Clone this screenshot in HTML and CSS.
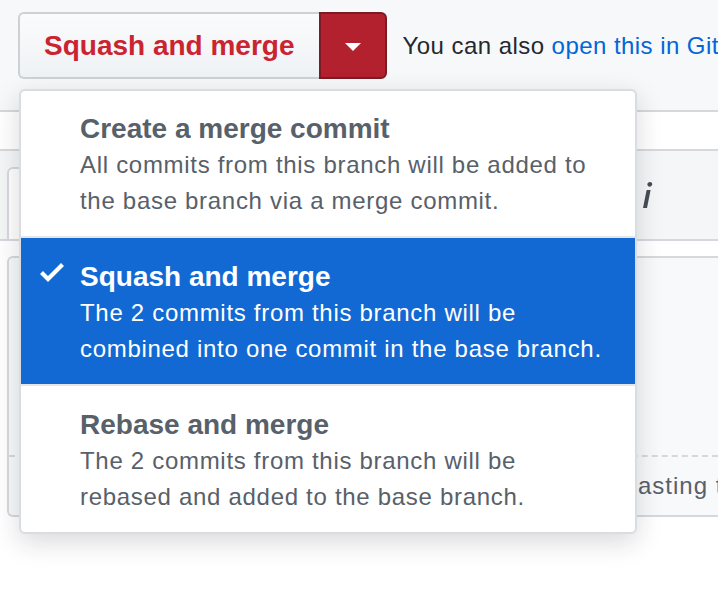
FILE: index.html
```html
<!DOCTYPE html>
<html lang="en">
<head>
<meta charset="utf-8">
<title>Merge options</title>
<link rel="stylesheet" href="styles.css">
</head>
<body>
<div class="page">
  <div class="merge-bar">
    <div class="btn-group">
      <button class="btn btn-merge" type="button">Squash and merge</button>
      <button class="btn btn-caret" type="button" aria-label="Select merge method"><span class="caret"></span></button>
    </div>
    <p class="note"><span>You can also <a href="#" class="link">open this in GitHub Desktop</a> or view <a href="#" class="link">command line instructions</a>.</span></p>
  </div>
  <div class="strip"></div>
  <div class="toolbar">
    <div class="tab">Write</div>
    <div class="tools">
      <svg class="tool-icon" width="12" height="32" viewBox="0 0 6 16" aria-hidden="true"><path fill="#444d56" d="M2.81 5h1.98L3 14H1l1.81-9zm.36-2.7c0-.7.58-1.3 1.33-1.3.56 0 1.13.38 1.13 1.03 0 .75-.59 1.3-1.33 1.3-.58 0-1.13-.38-1.13-1.03z"/></svg>
    </div>
  </div>
  <div class="gap"></div>
  <div class="editor-wrap">
    <div class="editor">
      <div class="textarea"></div>
      <div class="hint"><span>Attach files by dragging &amp; dropping, selecting or pasting</span><span class="hint-tail">&nbsp;them.</span></div>
    </div>
  </div>

  <div class="menu" role="menu">
    <div class="menu-item">
      <svg class="check" width="24" height="32" viewBox="0 0 12 16" aria-hidden="true"><path d="M12 5l-8 8-4-4 1.5-1.5L4 10l6.5-6.5L12 5z"/></svg>
      <div class="item-text">
        <div class="item-heading">Create a merge commit</div>
        <div class="item-desc">All commits from this branch will be added to the base branch via a merge commit.</div>
      </div>
    </div>
    <div class="menu-item selected">
      <svg class="check" width="24" height="32" viewBox="0 0 12 16" aria-hidden="true"><path d="M12 5l-8 8-4-4 1.5-1.5L4 10l6.5-6.5L12 5z"/></svg>
      <div class="item-text">
        <div class="item-heading">Squash and merge</div>
        <div class="item-desc">The 2 commits from this branch will be combined into one commit in the base branch.</div>
      </div>
    </div>
    <div class="menu-item">
      <svg class="check" width="24" height="32" viewBox="0 0 12 16" aria-hidden="true"><path d="M12 5l-8 8-4-4 1.5-1.5L4 10l6.5-6.5L12 5z"/></svg>
      <div class="item-text">
        <div class="item-heading">Rebase and merge</div>
        <div class="item-desc">The 2 commits from this branch will be rebased and added to the base branch.</div>
      </div>
    </div>
  </div>
</div>
</body>
</html>
```

FILE: styles.css
```css
* { box-sizing: border-box; }

html, body {
  margin: 0;
  padding: 0;
  background: #ffffff;
  overflow: hidden;
}

body {
  width: 718px;
  height: 604px;
  font-family: "Liberation Sans", Arial, sans-serif;
  color: #24292e;
}

.page {
  position: relative;
  width: 718px;
  height: 604px;
  overflow: hidden;
}

/* top merge bar */
.merge-bar {
  height: 112px;
  background: #f7f8fa;
  border-bottom: 2px solid #d5d9dd;
  padding: 12px 0 0 18px;
  display: flex;
  align-items: flex-start;
  white-space: nowrap;
}

.btn-group {
  display: flex;
  flex: none;
}

.btn {
  font-family: "Liberation Sans", Arial, sans-serif;
  height: 67px;
  margin: 0;
  cursor: pointer;
}

.btn-merge {
  padding: 0 24px;
  border: 2px solid #cdd1d5;
  border-right: 0;
  border-radius: 6px 0 0 6px;
  background: linear-gradient(#fafbfc, #eff2f5);
  color: #cb2431;
  font-size: 28px;
  font-weight: 700;
}

.btn-caret {
  width: 68px;
  padding: 0;
  border: 2px solid #7a1b25;
  border-radius: 0 6px 6px 0;
  background: #b3202e;
  display: flex;
  align-items: center;
  justify-content: center;
}

.caret {
  display: block;
  width: 0;
  height: 0;
  margin-top: 3px;
  border-top: 8px solid #ffffff;
  border-left: 8px solid transparent;
  border-right: 8px solid transparent;
}

.note {
  margin: 0 0 0 16px;
  height: 67px;
  display: flex;
  align-items: center;
  font-size: 24px;
  letter-spacing: 0.45px;
  color: #24292e;
}

.note .link {
  color: #0366d6;
  text-decoration: none;
}

/* background comment form */
.strip {
  height: 39px;
  background: #ffffff;
  border-bottom: 2px solid #d5d9dd;
}

.toolbar {
  height: 90px;
  background: #f5f6f8;
  border-bottom: 2px solid #d5d9dd;
  padding: 16px 0 0 7px;
  display: flex;
  justify-content: space-between;
  align-items: flex-start;
}

.tab {
  width: 130px;
  height: 72px;
  background: #ffffff;
  border: 2px solid #d5d9dd;
  border-bottom: 0;
  border-radius: 6px 6px 0 0;
  font-size: 24px;
  color: #24292e;
  padding: 18px 24px;
}

.tools {
  display: flex;
  padding-top: 13px;
  padding-right: 65px;
}

.tool-icon { display: block; }

.gap {
  height: 15px;
  background: #ffffff;
}

.editor-wrap {
  padding-left: 7px;
  background: #ffffff;
}

.editor {
  border: 2px solid #d5d9dd;
  border-right: 0;
  border-radius: 6px 0 0 6px;
  background: #f8f9fa;
}

.textarea {
  height: 197px;
}

.hint {
  height: 60px;
  border-top: 2px dashed #d5d9dd;
  padding-top: 11px;
  display: flex;
  justify-content: flex-end;
  white-space: nowrap;
  font-size: 24px;
  line-height: 36px;
  letter-spacing: 1px;
  color: #586069;
}

.hint-tail {
  flex: none;
  width: 10px;
  min-width: 0;
  overflow: visible;
}

/* dropdown menu */
.menu {
  position: absolute;
  left: 19px;
  top: 89px;
  width: 618px;
  background: #ffffff;
  border: 2px solid #d9dce0;
  border-radius: 6px;
  box-shadow: 0 8px 26px rgba(27, 31, 35, 0.17);
  overflow: hidden;
}

.menu-item {
  display: flex;
  align-items: flex-start;
  padding: 20px 28px 17px 19px;
  color: #586069;
}

.menu-item + .menu-item {
  border-top: 2px solid #e4e7ea;
  padding-top: 21px;
}

.check {
  flex: none;
  margin-top: -3px;
  margin-right: 16px;
  fill: #ffffff;
  visibility: hidden;
}

.menu-item.selected {
  background: #1269d3;
  color: #ffffff;
}

.menu-item.selected .check { visibility: visible; }

.item-text { flex: 1; min-width: 0; }

.item-heading {
  font-size: 28px;
  line-height: 36px;
  font-weight: 700;
}

.item-desc {
  font-size: 24px;
  line-height: 36px;
  letter-spacing: 0.7px;
}
```
